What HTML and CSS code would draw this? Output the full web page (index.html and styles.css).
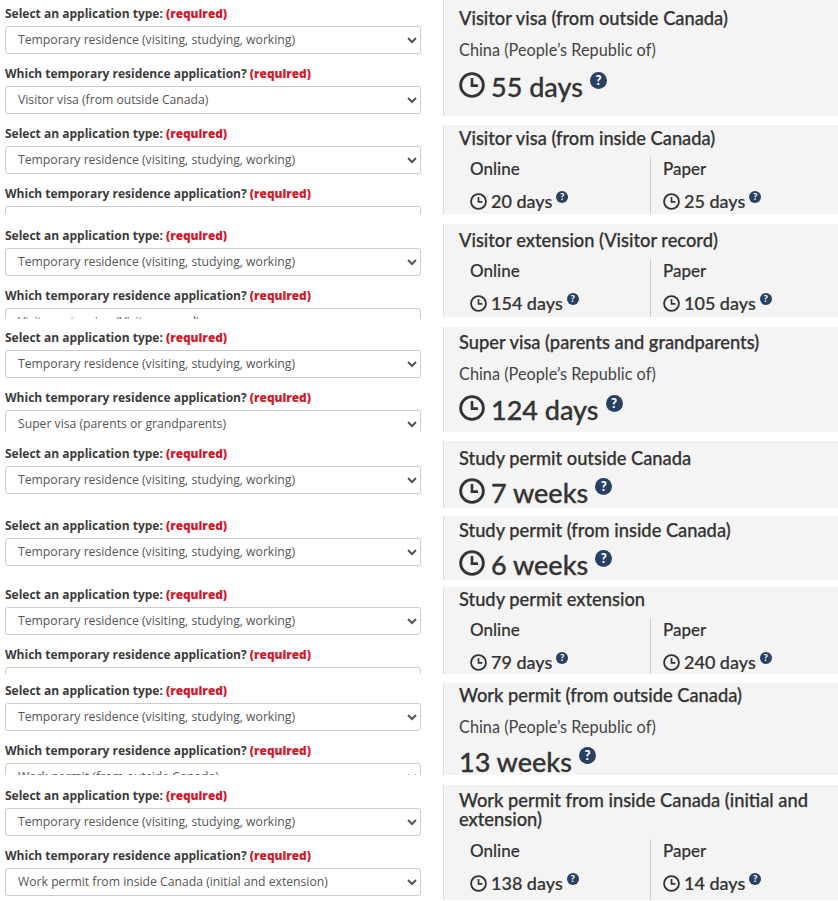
FILE: index.html
```html
<!DOCTYPE html>
<html lang="en">
  <head>
    <meta charset="UTF-8" />
    <title>Processing times</title>
    <link rel="stylesheet" href="styles.css">
  </head>
  <body>
    <svg class="defs" width="0" height="0">
      <symbol id="clock" viewBox="0 0 24 24">
        <circle cx="12" cy="12" r="10.5" fill="none" stroke="currentColor" stroke-width="2.6" />
        <path d="M12 5.5V12.6H17.5" fill="none" stroke="currentColor" stroke-width="2.4" />
      </symbol>
    </svg>

    <div class="page">
      <!-- Left column: the stacked forms -->
      <div class="forms">
        <form class="form form-1">
          <label>Select an application type: <strong>(required)</strong></label>
          <select><option>Temporary residence (visiting, studying, working)</option></select>
          <label>Which temporary residence application? <strong>(required)</strong></label>
          <select><option>Visitor visa (from outside Canada)</option></select>
        </form>
        <form class="form form-2">
          <label>Select an application type: <strong>(required)</strong></label>
          <select><option>Temporary residence (visiting, studying, working)</option></select>
          <label>Which temporary residence application? <strong>(required)</strong></label>
          <select><option>Visitor visa (from inside Canada)</option></select>
        </form>
        <form class="form form-3">
          <label>Select an application type: <strong>(required)</strong></label>
          <select><option>Temporary residence (visiting, studying, working)</option></select>
          <label>Which temporary residence application? <strong>(required)</strong></label>
          <select><option>Visitor extension (Visitor record)</option></select>
        </form>
        <form class="form form-4">
          <label>Select an application type: <strong>(required)</strong></label>
          <select><option>Temporary residence (visiting, studying, working)</option></select>
          <label>Which temporary residence application? <strong>(required)</strong></label>
          <select><option>Super visa (parents or grandparents)</option></select>
        </form>
        <form class="form form-5">
          <label>Select an application type: <strong>(required)</strong></label>
          <select><option>Temporary residence (visiting, studying, working)</option></select>
        </form>
        <form class="form form-6">
          <label>Select an application type: <strong>(required)</strong></label>
          <select><option>Temporary residence (visiting, studying, working)</option></select>
        </form>
        <form class="form form-7">
          <label>Select an application type: <strong>(required)</strong></label>
          <select><option>Temporary residence (visiting, studying, working)</option></select>
          <label>Which temporary residence application? <strong>(required)</strong></label>
          <select><option>Study permit extension</option></select>
        </form>
        <form class="form form-8">
          <label>Select an application type: <strong>(required)</strong></label>
          <select><option>Temporary residence (visiting, studying, working)</option></select>
          <label>Which temporary residence application? <strong>(required)</strong></label>
          <select><option>Work permit (from outside Canada)</option></select>
        </form>
        <form class="form form-9">
          <label>Select an application type: <strong>(required)</strong></label>
          <select><option>Temporary residence (visiting, studying, working)</option></select>
          <label>Which temporary residence application? <strong>(required)</strong></label>
          <select><option>Work permit from inside Canada (initial and extension)</option></select>
        </form>
      </div>

      <!-- Right column: the result panels -->
      <div class="panels">
        <section class="panel panel-1">
          <h3>Visitor visa (from outside Canada)</h3>
          <p class="country">China (People’s Republic of)</p>
          <p class="time"><svg class="clock"><use href="#clock" /></svg>55 days<span class="help">?</span></p>
        </section>
        <section class="panel panel-2">
          <h3>Visitor visa (from inside Canada)</h3>
          <div class="split">
            <div class="method">
              <h4>Online</h4>
              <p class="time-sm"><svg class="clock-sm"><use href="#clock" /></svg>20 days<span class="help-sm">?</span></p>
            </div>
            <div class="method">
              <h4>Paper</h4>
              <p class="time-sm"><svg class="clock-sm"><use href="#clock" /></svg>25 days<span class="help-sm">?</span></p>
            </div>
          </div>
        </section>
        <section class="panel panel-3">
          <h3>Visitor extension (Visitor record)</h3>
          <div class="split">
            <div class="method">
              <h4>Online</h4>
              <p class="time-sm"><svg class="clock-sm"><use href="#clock" /></svg>154 days<span class="help-sm">?</span></p>
            </div>
            <div class="method">
              <h4>Paper</h4>
              <p class="time-sm"><svg class="clock-sm"><use href="#clock" /></svg>105 days<span class="help-sm">?</span></p>
            </div>
          </div>
        </section>
        <section class="panel panel-4">
          <h3>Super visa (parents and grandparents)</h3>
          <p class="country">China (People’s Republic of)</p>
          <p class="time"><svg class="clock"><use href="#clock" /></svg>124 days<span class="help">?</span></p>
        </section>
        <section class="panel panel-5">
          <h3>Study permit outside Canada</h3>
          <p class="time"><svg class="clock"><use href="#clock" /></svg>7 weeks<span class="help">?</span></p>
        </section>
        <section class="panel panel-6">
          <h3>Study permit (from inside Canada)</h3>
          <p class="time"><svg class="clock"><use href="#clock" /></svg>6 weeks<span class="help">?</span></p>
        </section>
        <section class="panel panel-7">
          <h3>Study permit extension</h3>
          <div class="split">
            <div class="method">
              <h4>Online</h4>
              <p class="time-sm"><svg class="clock-sm"><use href="#clock" /></svg>79 days<span class="help-sm">?</span></p>
            </div>
            <div class="method">
              <h4>Paper</h4>
              <p class="time-sm"><svg class="clock-sm"><use href="#clock" /></svg>240 days<span class="help-sm">?</span></p>
            </div>
          </div>
        </section>
        <section class="panel panel-8">
          <h3>Work permit (from outside Canada)</h3>
          <p class="country">China (People’s Republic of)</p>
          <p class="time">13 weeks<span class="help">?</span></p>
        </section>
        <section class="panel panel-9">
          <h3>Work permit from inside Canada (initial and extension)</h3>
          <div class="split">
            <div class="method">
              <h4>Online</h4>
              <p class="time-sm"><svg class="clock-sm"><use href="#clock" /></svg>138 days<span class="help-sm">?</span></p>
            </div>
            <div class="method">
              <h4>Paper</h4>
              <p class="time-sm"><svg class="clock-sm"><use href="#clock" /></svg>14 days<span class="help-sm">?</span></p>
            </div>
          </div>
        </section>
      </div>
    </div>
  </body>
</html>
```
FILE: styles.css
```css
body {
  margin: 0;
  background: white;
  color: #333;
  overflow: hidden;
}

.defs {
  display: block;
}

.page {
  display: flex;
  height: 901px;
}

/* forms */
.forms {
  width: 443px;
  flex-shrink: 0;
  font-family: "Open Sans", sans-serif;
}

.form {
  overflow: hidden;
  padding: 3px 22px 0 5px;
  box-sizing: border-box;
}

.form label {
  display: block;
  height: 20px;
  line-height: 20px;
  font-size: 12px;
  font-weight: 700;
  color: #3b3b3b;
  white-space: nowrap;
}

.form strong {
  font-size: 11.8px;
  color: #d3182c;
}

.form select {
  display: block;
  width: 100%;
  height: 28px;
  margin: 3px 0 9px;
  padding: 0 8px 2px;
  font-family: "Open Sans", sans-serif;
  font-size: 12.2px;
  color: #555;
  background-color: white;
  border: 1px solid #ccc;
  border-radius: 3px;
}

.form-1 { height: 120px; }
.form-2 { height: 94px; margin-bottom: 8px; }
.form-3 { height: 97px; margin-bottom: 5px; }
.form-4 { height: 108px; margin-bottom: 8px; }
.form-5 { height: 72px; }
.form-6 { height: 69px; }
.form-7 { height: 93px; margin-bottom: 3px; }
.form-8 { height: 98px; margin-bottom: 7px; }
.form-9 { height: 119px; }

/* panels */
.panels {
  flex: 1;
  font-family: "Lato", sans-serif;
}

.panel {
  overflow: hidden;
  box-sizing: border-box;
  background: #f4f4f4;
  border-left: 1px solid #ddd;
  padding-left: 15px;
}

.panel h3 {
  margin: 0;
  font-size: 18.3px;
  line-height: 19px;
  font-weight: 500;
  -webkit-text-stroke: 0.25px #333;
  color: #333;
}

.panel-1 { height: 116px; margin-bottom: 9px; padding-top: 9px; }
.panel-2 { height: 89px; margin-bottom: 10px; padding-top: 4px; }
.panel-3 { height: 93px; margin-bottom: 10px; padding-top: 7px; }
.panel-4 { height: 105px; margin-bottom: 9px; padding-top: 6px; }
.panel-5 { height: 67px; margin-bottom: 8px; padding-top: 8px; }
.panel-6 { height: 64px; margin-bottom: 7px; padding-top: 5px; }
.panel-7 { height: 87px; margin-bottom: 9px; padding-top: 3px; }
.panel-8 { height: 92px; margin-bottom: 10px; padding-top: 3px; }
.panel-9 { height: 115px; padding-top: 6px; }

.country {
  margin: 12px 0 0;
  font-size: 16.3px;
  line-height: 20px;
  color: #444;
}

.time {
  margin: 8px 0 0;
  display: flex;
  align-items: center;
  font-size: 27px;
  line-height: 38px;
  font-weight: 500;
  -webkit-text-stroke: 0.3px #333;
}

.panel-4 .time { margin-top: 7px; }
.panel-5 .time,
.panel-6 .time { margin-top: 6px; }
.panel-8 .time { margin-top: 6px; }

.clock {
  width: 26px;
  height: 26px;
  margin: 0 6px 4px 0;
}

.help {
  align-self: flex-start;
  width: 17px;
  height: 17px;
  margin: 4px 0 0 7px;
  border-radius: 50%;
  background: #284162;
  color: white;
  font-size: 13px;
  line-height: 17px;
  font-weight: 900;
  text-align: center;
  -webkit-text-stroke: 0;
}

.split {
  display: flex;
  margin-top: 9px;
  margin-left: 11px;
}

.panel-9 .split { margin-top: 10px; }

.method {
  width: 180px;
  height: 100px;
  padding-top: 2px;
  box-sizing: border-box;
}

.method + .method {
  border-left: 1px solid #ccc;
  padding-left: 12px;
}

.method h4 {
  margin: 0;
  font-size: 17px;
  line-height: 20px;
  font-weight: 500;
  -webkit-text-stroke: 0.15px #333;
}

.time-sm {
  margin: 11px 0 0;
  display: flex;
  align-items: center;
  font-size: 18px;
  line-height: 22px;
  font-weight: 500;
  -webkit-text-stroke: 0.2px #333;
}

.clock-sm {
  width: 17px;
  height: 17px;
  margin-right: 4px;
}

.help-sm {
  align-self: flex-start;
  width: 12px;
  height: 12px;
  margin: 1px 0 0 4px;
  border-radius: 50%;
  background: #284162;
  color: white;
  font-size: 9.5px;
  line-height: 12px;
  font-weight: 900;
  text-align: center;
  -webkit-text-stroke: 0;
}
```
